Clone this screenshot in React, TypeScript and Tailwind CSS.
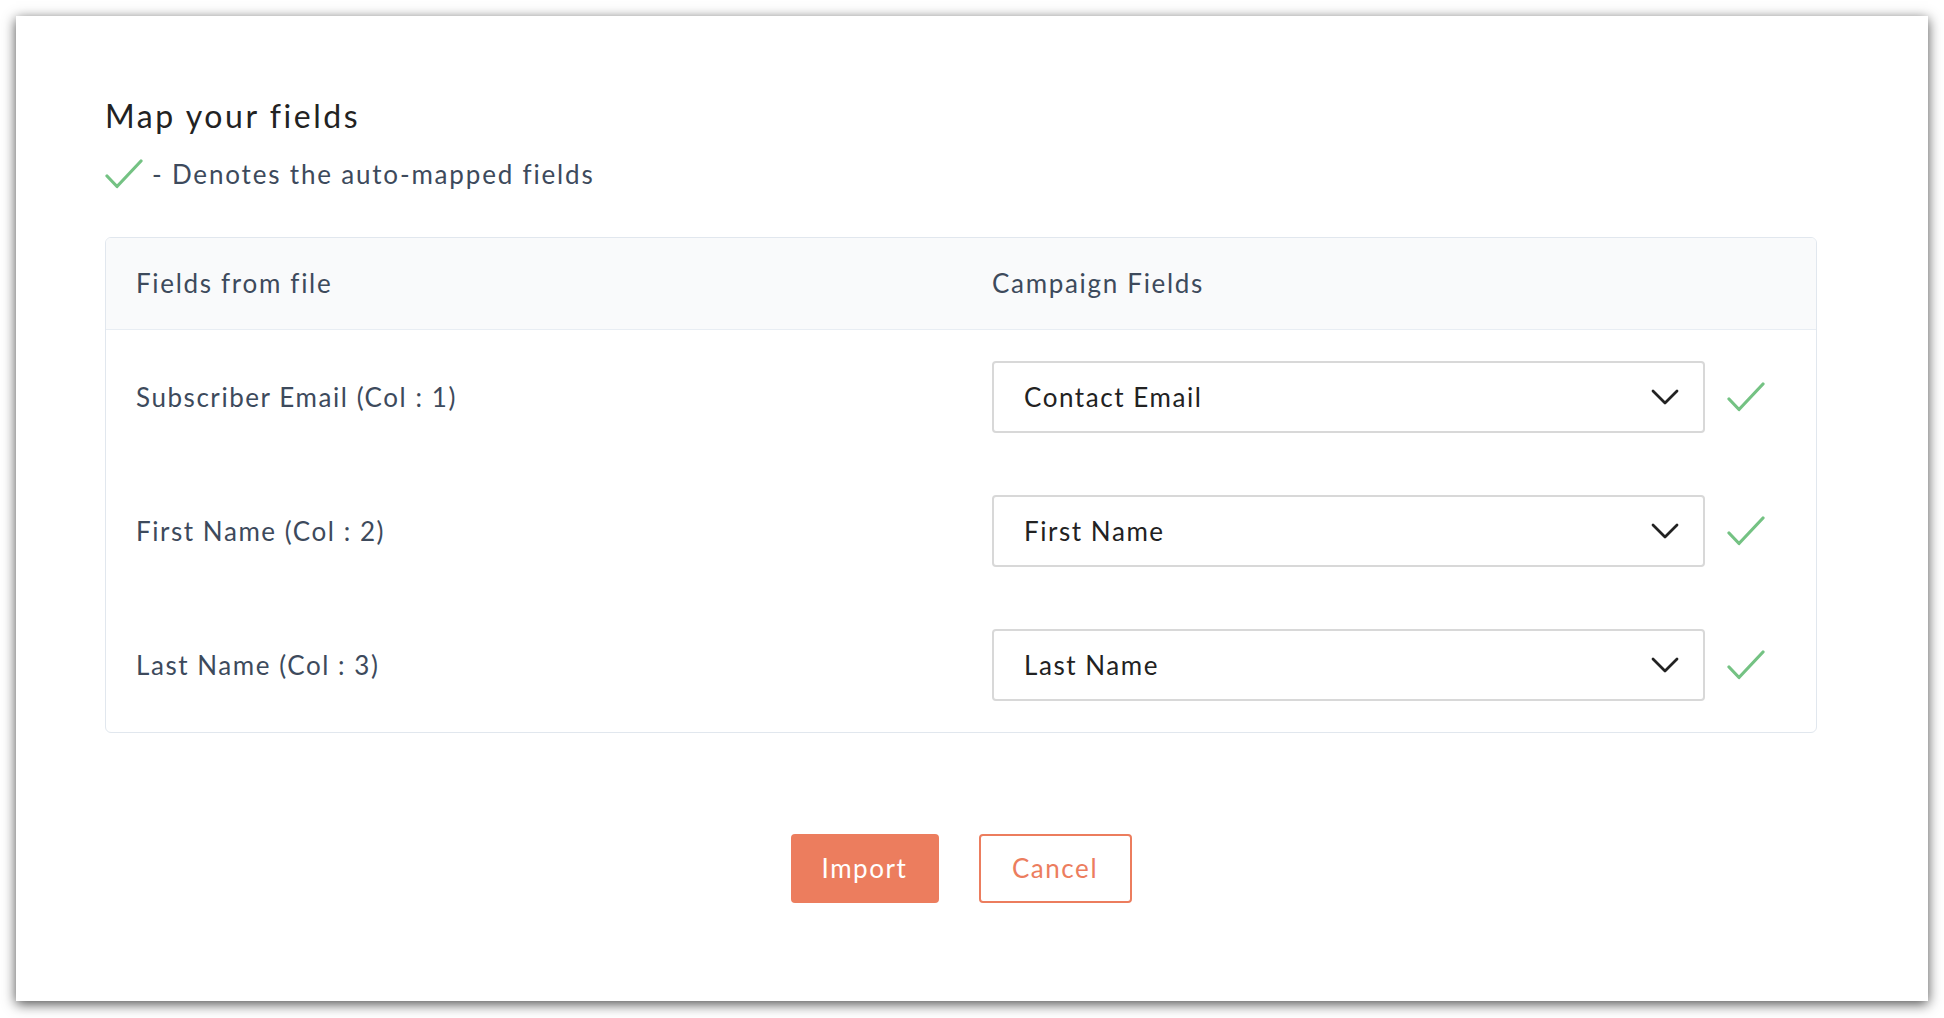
import React from "react";

type Mapping = { source: string; target: string };

const rows: Mapping[] = [
  { source: "Subscriber Email (Col : 1)", target: "Contact Email" },
  { source: "First Name (Col : 2)", target: "First Name" },
  { source: "Last Name (Col : 3)", target: "Last Name" },
];

function Check({ className = "" }: { className?: string }) {
  return (
    <svg viewBox="0 0 38 30" className={className} fill="none">
      <polyline
        points="2,17 12,27.5 36,2"
        stroke="#74c283"
        strokeWidth="3.2"
        strokeLinecap="round"
        strokeLinejoin="round"
      />
    </svg>
  );
}

function Chevron() {
  return (
    <svg viewBox="0 0 28 16" className="w-[28px] h-[16px]" fill="none">
      <polyline
        points="2,2 14,14 26,2"
        stroke="#222222"
        strokeWidth="2.8"
        strokeLinecap="round"
        strokeLinejoin="round"
      />
    </svg>
  );
}

export default function App() {
  return (
    <div
      className="h-screen w-full bg-white p-4 pb-[17px] flex"
      style={{ fontFamily: "Lato, 'Open Sans', sans-serif" }}
    >
      <div className="flex-1 bg-white shadow-[0_3px_12px_rgba(0,0,0,0.7)] pt-[80px] pl-[89px] pr-[111px] flex flex-col">
        <h1 className="text-[32px] leading-[40px] text-[#222] tracking-[0.08em] font-normal">
          Map your fields
        </h1>
        <div className="flex items-center mt-[21px] h-[34px]">
          <Check className="w-[38px] h-[30px]" />
          <span className="ml-[9px] text-[26px] leading-[34px] text-[#3d4a5c] tracking-[0.07em]">
            - Denotes the auto-mapped fields
          </span>
        </div>

        <div className="mt-[46px] border border-[#e1e7ee] rounded-[6px] overflow-hidden">
          <div className="h-[92px] bg-[#f9fafb] border-b border-[#e8edf3] flex items-center pl-[30px] text-[26px] text-[#3d4a5c] tracking-[0.065em]">
            <span className="w-[856px]">Fields from file</span>
            <span>Campaign Fields</span>
          </div>
          {rows.map((r) => (
            <div key={r.source} className="h-[134px] flex items-center pl-[30px]">
              <span className="w-[856px] text-[26px] text-[#3d4a5c] tracking-[0.06em]">
                {r.source}
              </span>
              <div className="w-[713px] h-[72px] border-2 border-[#d8d8d8] rounded-[4px] flex items-center justify-between pl-[30px] pr-[24px]">
                <span className="text-[26px] text-[#222] tracking-[0.06em]">{r.target}</span>
                <Chevron />
              </div>
              <Check className="w-[38px] h-[30px] ml-[22px]" />
            </div>
          ))}
        </div>

        <div className="mt-[101px] flex justify-center gap-[40px]">
          <button className="w-[148px] h-[69px] rounded-[4px] bg-[#ec7d5e] text-white text-[26px] tracking-[0.06em]">
            Import
          </button>
          <button className="w-[153px] h-[69px] rounded-[4px] border-2 border-[#ec7d5e] text-[#ec7d5e] text-[26px] tracking-[0.06em] bg-white">
            Cancel
          </button>
        </div>
      </div>
    </div>
  );
}
